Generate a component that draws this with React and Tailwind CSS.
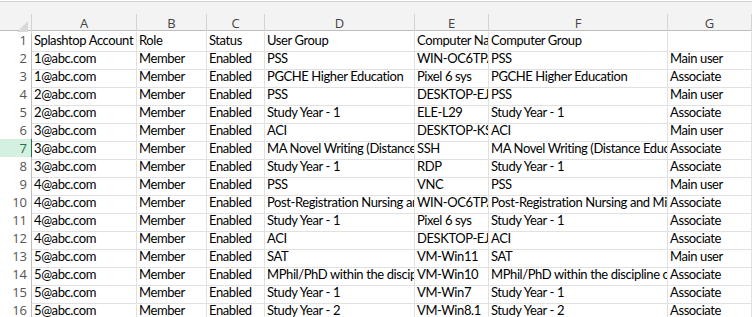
import React from "react";

const cols = ["A", "B", "C", "D", "E", "F", "G"];

const rows = [
  ["Splashtop Account", "Role", "Status", "User Group", "Computer Name", "Computer Group", ""],
  ["1@abc.com", "Member", "Enabled", "PSS", "WIN-OC6TPA4K2M", "PSS", "Main user"],
  ["1@abc.com", "Member", "Enabled", "PGCHE Higher Education", "Pixel 6 sys", "PGCHE Higher Education", "Associate"],
  ["2@abc.com", "Member", "Enabled", "PSS", "DESKTOP-EJC8R1Q", "PSS", "Main user"],
  ["2@abc.com", "Member", "Enabled", "Study Year - 1", "ELE-L29", "Study Year - 1", "Associate"],
  ["3@abc.com", "Member", "Enabled", "ACI", "DESKTOP-KS7H2LP", "ACI", "Main user"],
  ["3@abc.com", "Member", "Enabled", "MA Novel Writing (Distance Education)", "SSH", "MA Novel Writing (Distance Education)", "Associate"],
  ["3@abc.com", "Member", "Enabled", "Study Year - 1", "RDP", "Study Year - 1", "Associate"],
  ["4@abc.com", "Member", "Enabled", "PSS", "VNC", "PSS", "Main user"],
  ["4@abc.com", "Member", "Enabled", "Post-Registration Nursing and Midwifery", "WIN-OC6TPA4K2M", "Post-Registration Nursing and Midwifery", "Associate"],
  ["4@abc.com", "Member", "Enabled", "Study Year - 1", "Pixel 6 sys", "Study Year - 1", "Associate"],
  ["4@abc.com", "Member", "Enabled", "ACI", "DESKTOP-EJC8R1Q", "ACI", "Associate"],
  ["5@abc.com", "Member", "Enabled", "SAT", "VM-Win11", "SAT", "Main user"],
  ["5@abc.com", "Member", "Enabled", "MPhil/PhD within the discipline of Nursing", "VM-Win10", "MPhil/PhD within the discipline of Nursing", "Associate"],
  ["5@abc.com", "Member", "Enabled", "Study Year - 1", "VM-Win7", "Study Year - 1", "Associate"],
  ["5@abc.com", "Member", "Enabled", "Study Year - 2", "VM-Win8.1", "Study Year - 2", "Associate"],
];

const grid = "grid grid-cols-[32px_105px_70px_58px_150px_74px_179px_1fr]";

export default function App() {
  return (
    <div className="w-[752px] h-[317px] overflow-hidden bg-white font-['Lato',sans-serif]">
      {/* top edge of ribbon */}
      <div className="h-[2px] bg-white border-b border-[#d2d2d2]" />
      {/* column headers */}
      <div className={`${grid} h-[29px] bg-[#f3f3f3] border-b border-[#bdbdbd]`}>
        <div className="relative border-r border-[#d4d4d4] mt-[12px]">
          <div className="absolute right-[3px] bottom-[2px] w-0 h-0 border-l-[11px] border-l-transparent border-b-[11px] border-b-[#d9d9d9]" />
        </div>
        {cols.map((c) => (
          <div
            key={c}
            className="mt-[12px] border-r border-[#d4d4d4] flex items-center justify-center text-[13px] text-[#444] font-['Open_Sans',sans-serif]"
          >
            {c}
          </div>
        ))}
      </div>
      {rows.map((r, i) => {
        const sel = i === 6;
        return (
          <div key={i} className={`${grid} h-[18px]`}>
            <div
              className={`border-b flex items-center justify-end pr-[4px] text-[13px] font-['Open_Sans',sans-serif] ${
                sel
                  ? "bg-[#d3f0e0] text-[#217346] border-r border-r-[#217346] border-b-[#bcd9c9]"
                  : "bg-white text-[#555] border-r border-r-[#bdbdbd] border-b-[#e1e1e1]"
              }`}
            >
              {i + 1}
            </div>
            {r.map((v, j) => (
              <div
                key={j}
                className="border-r border-b border-[#e1e1e1] pl-[2px] text-[13px] tracking-[-0.4px] leading-[18px] text-black whitespace-nowrap overflow-hidden"
              >
                {v}
              </div>
            ))}
          </div>
        );
      })}
    </div>
  );
}
